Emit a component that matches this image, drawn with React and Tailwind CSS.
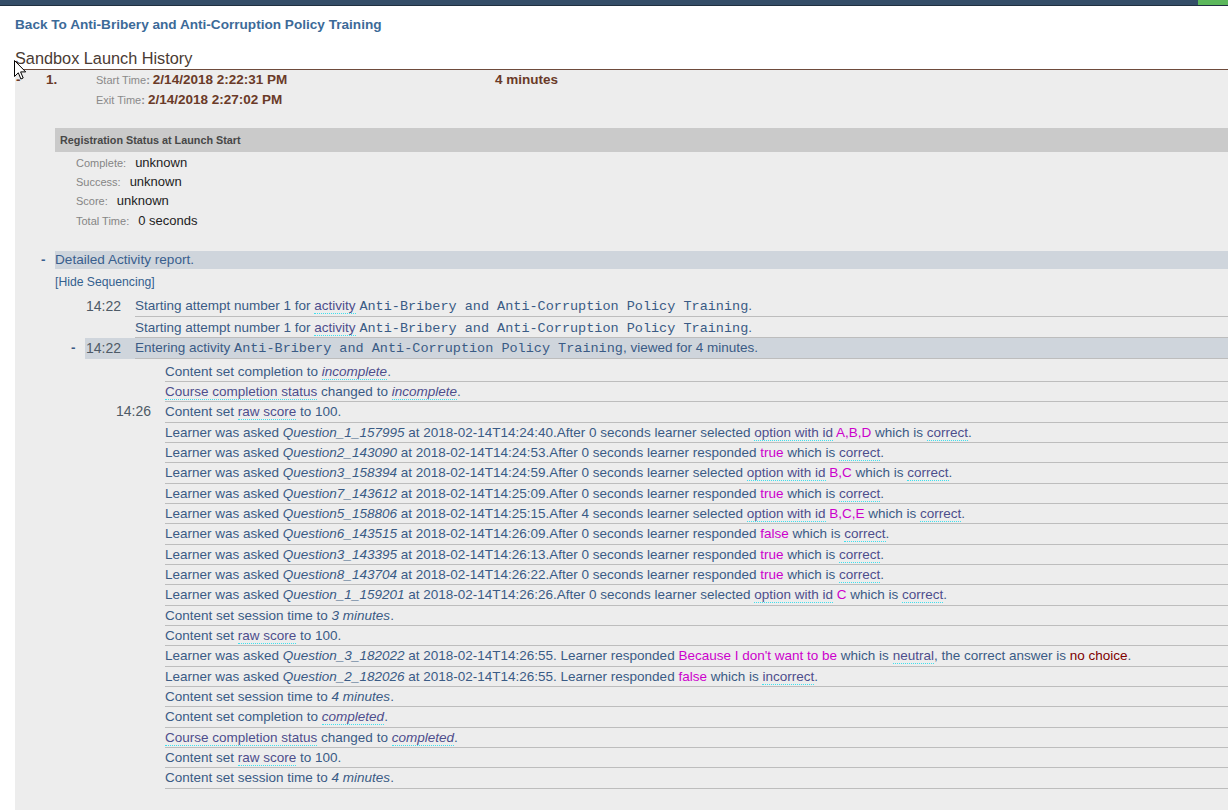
import React from "react";

const Abbr = ({ children, italic = false }) => (
    <span className={`text-[#4d4e8c] border-b border-dotted border-[#3fe0ee] ${italic ? "italic" : ""}`}>
        {children}
    </span>
);
const Q = ({ children }) => <span className="italic">{children}</span>;
const M = ({ children }) => <span className="text-[#cc00cc]">{children}</span>;
const Mono = ({ children }) => (
    <span className="font-['Liberation_Mono','Courier_New',monospace] text-[13.5px] leading-[10px]">{children}</span>
);

const asked = (q, at, secs, kind, val) => (
    <>
        Learner was asked <Q>{q}</Q> at 2018-02-14T{at}.After {secs} seconds learner{" "}
        {kind === "option" ? (
            <>
                selected <Abbr>option with id</Abbr> <M>{val}</M>
            </>
        ) : (
            <>
                responded <M>{val}</M>
            </>
        )}{" "}
        which is <Abbr>correct</Abbr>.
    </>
);

// rows inside the "Entering activity" block
const nested = [
    { body: <>Content set completion to <Abbr italic>incomplete</Abbr>.</> },
    { body: <><Abbr>Course completion status</Abbr> changed to <Abbr italic>incomplete</Abbr>.</> },
    { time: "14:26", body: <>Content set <Abbr>raw score</Abbr> to 100.</> },
    { body: asked("Question_1_157995", "14:24:40", 0, "option", "A,B,D") },
    { body: asked("Question2_143090", "14:24:53", 0, "resp", "true") },
    { body: asked("Question3_158394", "14:24:59", 0, "option", "B,C") },
    { body: asked("Question7_143612", "14:25:09", 0, "resp", "true") },
    { body: asked("Question5_158806", "14:25:15", 4, "option", "B,C,E") },
    { body: asked("Question6_143515", "14:26:09", 0, "resp", "false") },
    { body: asked("Question3_143395", "14:26:13", 0, "resp", "true") },
    { body: asked("Question8_143704", "14:26:22", 0, "resp", "true") },
    { body: asked("Question_1_159201", "14:26:26", 0, "option", "C") },
    { body: <>Content set session time to <Q>3 minutes</Q>.</> },
    { body: <>Content set <Abbr>raw score</Abbr> to 100.</> },
    {
        body: (
            <>
                Learner was asked <Q>Question_3_182022</Q> at 2018-02-14T14:26:55. Learner responded{" "}
                <M>Because I don't want to be</M> which is <Abbr>neutral</Abbr>, the correct answer is{" "}
                <span className="text-[#800000]">no choice</span>.
            </>
        ),
    },
    {
        body: (
            <>
                Learner was asked <Q>Question_2_182026</Q> at 2018-02-14T14:26:55. Learner responded <M>false</M>{" "}
                which is <Abbr>incorrect</Abbr>.
            </>
        ),
    },
    { body: <>Content set session time to <Q>4 minutes</Q>.</> },
    { body: <>Content set completion to <Abbr italic>completed</Abbr>.</> },
    { body: <><Abbr>Course completion status</Abbr> changed to <Abbr italic>completed</Abbr>.</> },
    { body: <>Content set <Abbr>raw score</Abbr> to 100.</> },
    { body: <>Content set session time to <Q>4 minutes</Q>.</> },
];

const regStatus = [
    ["Complete:", "unknown"],
    ["Success:", "unknown"],
    ["Score:", "unknown"],
    ["Total Time:", "0 seconds"],
];

const startingAttempt = (
    <>
        Starting attempt number 1 for <Abbr>activity</Abbr> <Mono>Anti-Bribery and Anti-Corruption Policy Training</Mono>.
    </>
);

export default function App() {
    return (
        <div className="relative min-h-[810px] bg-white font-['Liberation_Sans',Arial,sans-serif] text-[#3a5b85]">
            {/* top bar */}
            <div className="flex h-[6px] bg-[#344e68] border-b border-[#1f3040]">
                <div className="flex-1" />
                <div className="w-[30px] bg-[#5cb85c]" />
            </div>

            <div className="pl-[15px]">
                <div className="pt-[10px] text-[13.6px] font-bold text-[#3c6a98] leading-[18px]">
                    Back To Anti-Bribery and Anti-Corruption Policy Training
                </div>
                <div className="mt-[14px] text-[16.3px] leading-[20px] text-[#4a3b33] border-b border-[#6e4b3c] pb-[1px]">
                    Sandbox Launch History
                </div>

                {/* launch panel */}
                <div className="bg-[#ededed] min-h-[741px]">
                    <div className="flex pt-[1px] text-[#6a3a28] font-bold text-[13.5px]">
                        <div className="w-[31px] pl-[1px] leading-[18px]">-</div>
                        <div className="w-[50px] leading-[18px]">1.</div>
                        <div className="w-[399px]">
                            <div className="leading-[18px]">
                                <span className="font-normal text-[11px] text-[#8a8a8a]">Start Time</span>
                                <span className="text-[11px] text-[#8a8a8a]">: </span>
                                2/14/2018 2:22:31 PM
                            </div>
                            <div className="leading-[21px]">
                                <span className="font-normal text-[11px] text-[#8a8a8a]">Exit Time</span>
                                <span className="text-[11px] text-[#8a8a8a]">: </span>
                                2/14/2018 2:27:02 PM
                            </div>
                        </div>
                        <div className="leading-[18px]">4 minutes</div>
                    </div>

                    <div className="pl-[40px] pt-[17px]">
                        {/* registration status */}
                        <div className="h-[24px] bg-[#cacaca] pl-[5px] text-[10.8px] font-bold text-[#474747] leading-[24px]">
                            Registration Status at Launch Start
                        </div>
                        <div className="pl-[21px] pt-[0.5px]">
                            {regStatus.map(([label, value]) => (
                                <div key={label} className="flex items-baseline h-[19.4px] leading-[19.4px]">
                                    <span className="text-[11px] text-[#858585]">{label}</span>
                                    <span className="ml-[9px] text-[13px] text-[#222]">{value}</span>
                                </div>
                            ))}
                        </div>

                        {/* detailed activity report */}
                        <div className="relative mt-[20.5px] h-[18px] bg-[#cfd5dc] text-[13.6px] leading-[18px] text-[#3a5f8e]">
                            <span className="absolute -left-[14px] font-bold">-</span>
                            Detailed Activity report.
                        </div>
                        <div className="mt-[4px] text-[12.2px] leading-[18px] text-[#34608e]">[Hide Sequencing]</div>

                        <div className="mt-[5px] text-[13.5px]">
                            <div className="flex pl-[31px] h-[21px] leading-[20px]">
                                <div className="w-[49px] text-[14px] text-[#4e5a66]">14:22</div>
                                <div className="flex-1 border-b border-[#bdbdbd] whitespace-nowrap">{startingAttempt}</div>
                            </div>
                            <div className="flex pl-[80px] h-[21px] leading-[21px]">
                                <div className="flex-1 border-b border-[#bdbdbd] whitespace-nowrap">{startingAttempt}</div>
                            </div>
                            <div className="flex h-[21px] leading-[20px]">
                                <div className="w-[30px] pl-[16px] font-bold">-</div>
                                <div className="flex flex-1 bg-[#cfd5dc]">
                                    <div className="w-[50px] pl-[1px] text-[14px] text-[#4e5a66]">14:22</div>
                                    <div className="flex-1 border-b border-[#bdbdbd] whitespace-nowrap">
                                        Entering activity <Mono>Anti-Bribery and Anti-Corruption Policy Training</Mono>, viewed for 4 minutes.
                                    </div>
                                </div>
                            </div>
                            <div className="pl-[61px] pt-[3px]">
                                {nested.map((row, i) => (
                                    <div key={i} className="flex h-[20.35px] leading-[19.35px]">
                                        <div className="w-[49px] text-[14px] text-[#4e5a66]">{row.time || ""}</div>
                                        <div className="flex-1 border-b border-[#bdbdbd] whitespace-nowrap">{row.body}</div>
                                    </div>
                                ))}
                            </div>
                        </div>
                    </div>
                </div>
            </div>

            {/* mouse pointer over the page */}
            <svg className="absolute left-[14px] top-[60px]" width="13" height="21" viewBox="0 0 13 21">
                <path d="M0.5 0.5 L0.5 16.5 L4.3 12.8 L6.9 19 L9.2 18 L6.6 11.9 L11.7 11.9 Z" fill="#fff" stroke="#000" strokeWidth="1" strokeLinejoin="miter" />
            </svg>
        </div>
    );
}
